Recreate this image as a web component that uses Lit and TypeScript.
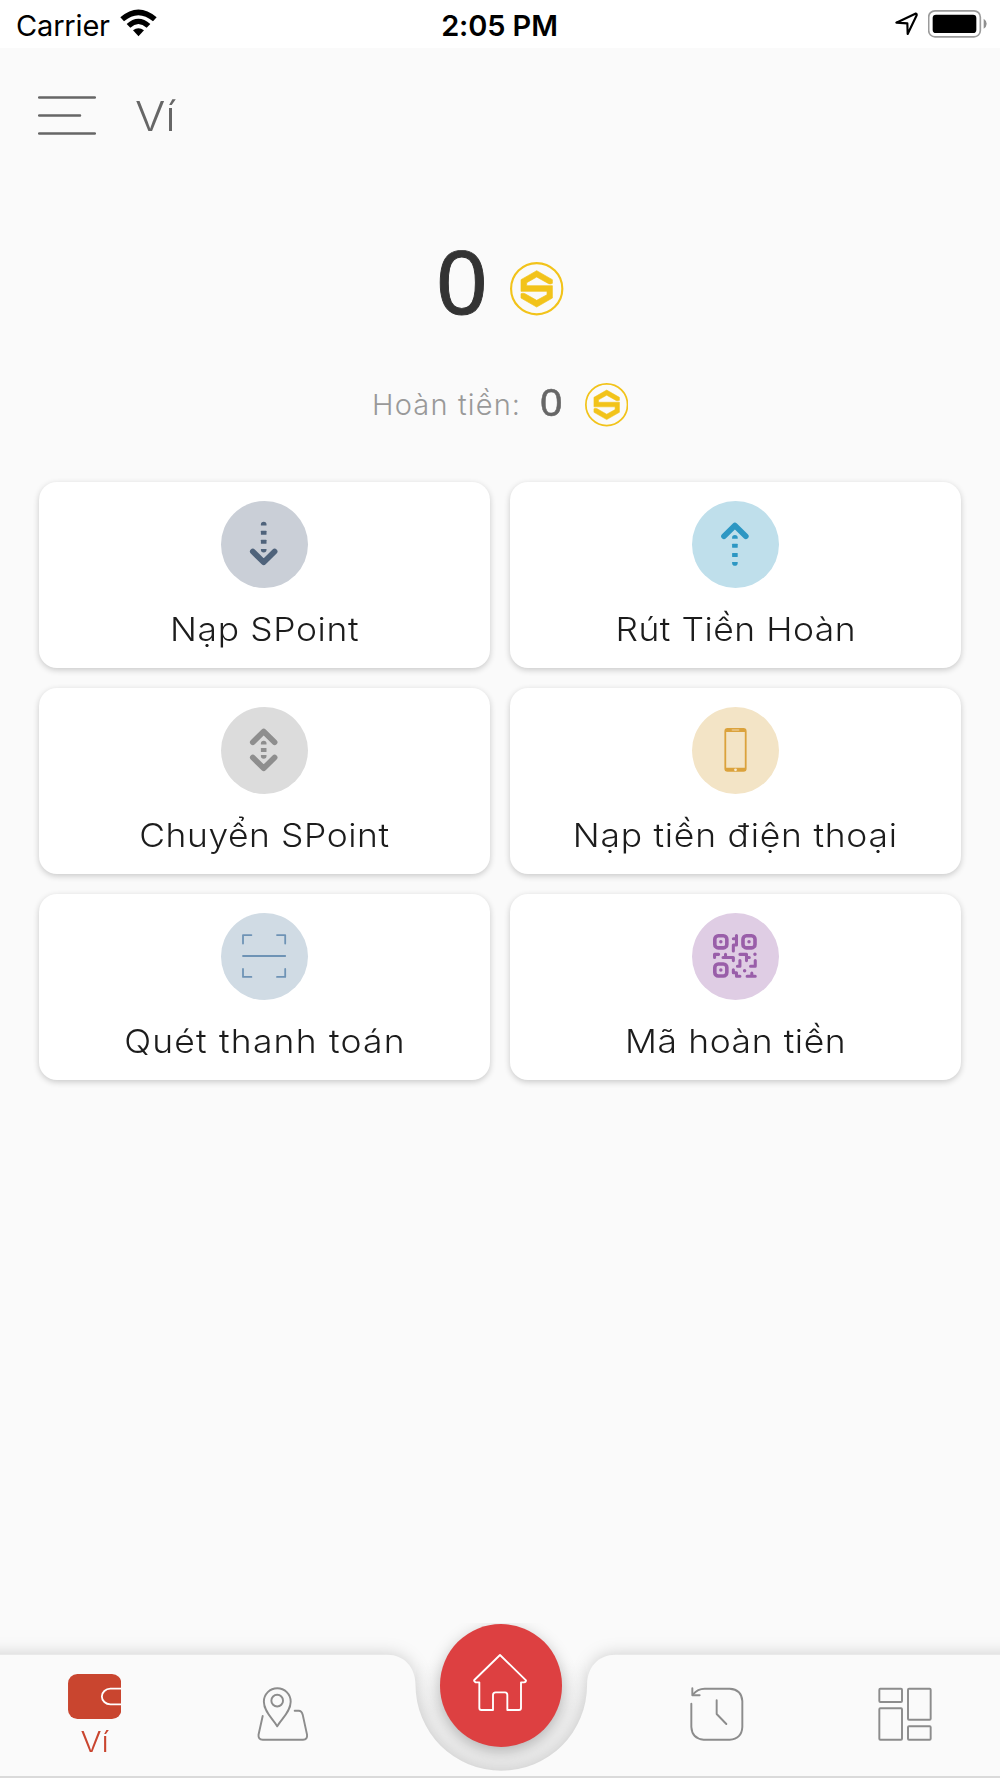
import { LitElement, html, svg, css } from "lit";
import { customElement, property } from "lit/decorators.js";
import { styleMap } from "lit/directives/style-map.js";

const dash = (x: number, y: number, h: number) =>
  svg`<rect x=${x - 2.8} y=${y} width="5.6" height=${h} rx="0.5" fill="currentColor" />`;
const capTop = (x: number, y: number) =>
  svg`<path d="M${x - 2.8} ${y + 3.5}V${y + 2.6}a2.8 2.8 0 0 1 5.6 0v.9z" fill="currentColor" />`;
const capBottom = (x: number, y: number) =>
  svg`<path d="M${x - 2.8} ${y}v.9a2.8 2.8 0 0 0 5.6 0v-.9z" fill="currentColor" />`;
const chevron = (d: string) =>
  svg`<path d=${d} fill="none" stroke="currentColor" stroke-width="5.7" stroke-linecap="round" stroke-linejoin="round" />`;

const glyphs: Record<string, unknown> = {
  down: svg`${capTop(42.7, 21)}${dash(42.7, 29.7, 4)}${dash(42.7, 38.7, 4)}${capBottom(42.7, 47.9)}
    ${chevron("M31.8 50.5L42.7 61.3L53.6 50.5")}`,
  up: svg`${chevron("M32 35.2L42.9 24.4L53.8 35.2")}
    ${capTop(42.9, 34.2)}${dash(42.9, 42.8, 4)}${dash(42.9, 52, 4)}${capBottom(42.9, 61)}`,
  both: svg`${chevron("M31.8 35.2L42.7 24.4L53.6 35.2")}
    ${capTop(42.7, 34)}${dash(42.7, 41, 4)}${capBottom(42.7, 48)}
    ${chevron("M31.8 50.5L42.7 61.3L53.6 50.5")}`,
  phone: svg`<path fill-rule="evenodd" fill="currentColor"
      d="M35.6 21H51.4A3.2 3.2 0 0 1 54.6 24.2V61.5A3.2 3.2 0 0 1 51.4 64.7H35.6A3.2 3.2 0 0 1 32.4 61.5V24.2A3.2 3.2 0 0 1 35.6 21ZM34.2 25V60.8H52.8V25Z" />
    <path d="M40.5 23H46.5" stroke="#e6bd74" stroke-width="1.8" stroke-linecap="round" />
    <circle cx="43.5" cy="62.8" r="1.4" fill="#f7ead0" />`,
  scan: svg`<path d="M22 30.5V22.1H30.4M56 22.1H64.2V30.5M64.2 56V63.9H56M30.4 63.9H22V56M22 43H64.2"
      fill="none" stroke="currentColor" stroke-width="1.8" stroke-linecap="round" stroke-linejoin="round" />`,
  code: svg`<g transform="translate(21 21) scale(3.13)" fill="none" stroke="currentColor" stroke-linecap="round" stroke-linejoin="round">
      <g stroke-width="1.15">
        <rect x=".58" y=".58" width="3.84" height="3.84" rx="1.1" />
        <rect x="9.58" y=".58" width="3.84" height="3.84" rx="1.1" />
        <rect x=".58" y="9.58" width="3.84" height="3.84" rx="1.1" />
      </g>
      <path stroke-width="1.1" d="M2.5 2.5h.01M11.5 2.5h.01M2.5 11.5h.01M13.4 6.5h.01M10.1 11.75h.01" />
      <path stroke-width=".98" d="M7.5 .5V3.5H6.5V5.4M6.5 1.5H7.5M.5 7.5V6.5H1.8M3.2 7.5H6.5V8.5M4 6.5V7.5M8.6 6.5H10.7V8.5M10.7 7.5H11.6M8.6 8.5V10.3H7.8M13.5 8.5V10.3H12M6.5 11.4V12.4H7.5V13.5H8.6M10.9 13.5H13.5M12.4 12.5V13.5" />
    </g>`,
};

@customElement("s-coin")
class SCoin extends LitElement {
  @property({ type: Number }) size = 53;
  static styles = css`
    :host { display: block; line-height: 0; color: #f2c31a; }
  `;
  render() {
    return html`<svg width=${this.size} height=${this.size} viewBox="-80 -80 160 160">
      <circle r="76.8" fill="none" stroke="currentColor" stroke-width="6.4" />
      <path fill="currentColor" stroke="currentColor" stroke-width="2" stroke-linejoin="round"
        d="M0 -54L47 -27V-16Q42 -13 36 -15L0 -35L-30 -18V-9H47V28L0 55L-47 28V15Q-41 12 -35 15L0 35L31 18V8H-47V-27Z" />
    </svg>`;
  }
}

@customElement("action-card")
class ActionCard extends LitElement {
  @property() label = "";
  @property() icon = "";
  @property({ type: Number }) tracking = 0.5;
  static styles = css`
    :host {
      display: flex; flex-direction: column; align-items: center; box-sizing: border-box;
      height: 186.6px; padding-top: 19.3px; border-radius: 18px; background: #fff;
      box-shadow: 0 2px 6px rgba(0, 0, 0, 0.2);
      font: 300 33.2px/40px Inter, sans-serif; color: #1c1c1c;
    }
    svg { display: block; width: 87px; height: 87px; border-radius: 50%; flex: none; }
    .label { margin-top: 21px; white-space: nowrap; transform: scaleX(1.067); }
    .down { background: #cacfd7; color: #4f637b; }
    .up { background: #bfdfeb; color: #2d97c3; }
    .both { background: #dcdcdc; color: #8e8e8e; }
    .phone { background: #f3e4c6; color: #dba23c; }
    .scan { background: #d0dbe4; color: #6e93b5; }
    .code { background: #dfcde4; color: #995ea9; }
  `;
  render() {
    return html`<svg class=${this.icon} viewBox="0 0 87 87">${glyphs[this.icon]}</svg>
      <div class="label" style=${styleMap({ letterSpacing: `${this.tracking}px` })}>${this.label}</div>`;
  }
}

@customElement("tab-bar")
class TabBar extends LitElement {
  static styles = css`
    :host { display: block; position: relative; height: 155px; overflow: hidden; flex: none; }
    svg { display: block; }
    .shape { position: absolute; inset: 0; }
    .surface { filter: drop-shadow(0 -1px 8px rgba(0, 0, 0, 0.17)); }
    .tabs {
      position: relative; display: grid; grid-template-columns: 188.5px 188px 1fr 188px 188.5px;
      height: 155px; padding-right: 1px;
    }
    .tab { display: flex; flex-direction: column; align-items: center; padding-top: 64px; color: #8c8c8c; }
    .tab.active { padding-top: 51px; color: #c9452f; font: 300 28px/34px Inter, sans-serif; }
    .tab.active span { margin-top: 6px; transform: scaleX(1.12); }
    .home { display: flex; justify-content: center; padding: 1.2px 0 0 3.6px; }
    .button {
      display: flex; justify-content: center; align-items: center; box-sizing: border-box;
      width: 122.4px; height: 122.4px; padding: 0 3px 5px 0; border-radius: 50%; background: #dd4041;
      box-shadow: 0 5px 16px rgba(0, 0, 0, 0.26);
    }
    .stroke { fill: none; stroke: currentColor; stroke-width: 5.8; stroke-linecap: round; stroke-linejoin: round; }
  `;
  render() {
    return html`
      <svg class="shape" width="1000" height="155" viewBox="0 0 1000 155">
        <defs>
          <linearGradient id="well" x1="0" y1="0" x2="0" y2="1">
            <stop offset="0.35" stop-color="#efefef" stop-opacity="0" />
            <stop offset="0.65" stop-color="#f0f0f0" />
          </linearGradient>
        </defs>
        <circle cx="501.3" cy="62" r="86.5" fill="url(#well)" />
        <path class="surface" fill="#fafafa"
          d="M-40 31.7H387C404 31.7 415.5 44 415.5 62A85.8 85.8 0 0 0 587.1 62C587.1 44 598.5 31.7 615.5 31.7H1040V200H-40Z" />
        <path d="M0 154H1000" stroke="#dadada" stroke-width="2" />
      </svg>
      <div class="tabs">
        <div class="tab active">
          <svg width="53.4" height="45" viewBox="0 0 160 135">
            <rect width="160" height="135" rx="28" fill="currentColor" />
            <path d="M160 44H127A25 23 0 0 0 127 91H160" fill="none" stroke="#fff" stroke-width="5.5" />
          </svg>
          <span>Ví</span>
        </div>
        <div class="tab">
          <svg width="53.4" height="54" viewBox="767 262 160 162">
            <g class="stroke">
              <path d="M830.5 380C820 360 790.5 337 790.5 306A40.2 40.2 0 0 1 871 306C871 337 841 360 830.5 380Z" />
              <circle cx="830.5" cy="303" r="17.5" />
              <path d="M787 349L774.5 405Q773 420 787 420H908Q922 420 920 405L907 345Q904 333 895 333H883" />
            </g>
          </svg>
        </div>
        <div class="home">
          <div class="button">
            <svg width="56" height="60" viewBox="276 158 168 180">
              <path d="M360 164L438 240Q438 246 432 246H423V323Q423 329 417 329H382V284Q382 276 375 276H347Q339 276 339 284V329H304Q298 329 298 323V246H287Q281 243 283 239Z"
                fill="none" stroke="#fff" stroke-width="5.6" stroke-linejoin="round" />
            </svg>
          </div>
        </div>
        <div class="tab">
          <svg width="54" height="54" viewBox="269 262 162 162">
            <g class="stroke">
              <path d="M273 312V382Q275 417 310 420H388Q424 418 426 382V304Q424 269 388 267H313Q292 267 278 284" />
              <path d="M276 266V287H298M349 302V343L378 373" />
            </g>
          </svg>
        </div>
        <div class="tab">
          <svg width="54" height="54" viewBox="834 262 162 162">
            <g class="stroke">
              <rect x="838" y="267" width="68" height="40" rx="3" />
              <rect x="838" y="326" width="68" height="94" rx="3" />
              <rect x="924" y="267" width="68" height="93" rx="3" />
              <rect x="924" y="380" width="68" height="40" rx="3" />
            </g>
          </svg>
        </div>
      </div>`;
  }
}

@customElement("app-root")
class AppRoot extends LitElement {
  static styles = css`
    :host {
      display: flex; flex-direction: column; width: 1000px; height: 1778px; overflow: hidden;
      background: #fafafa; font-family: Inter, sans-serif; color: #000;
    }
    svg { display: block; }
    .status {
      display: grid; grid-template-columns: 1fr auto 1fr; align-items: center; box-sizing: border-box;
      height: 48px; padding: 3px 13px 0 16px; background: #fff; font-size: 29px; line-height: 36px; flex: none;
    }
    .carrier { display: flex; align-items: center; gap: 10px; letter-spacing: -0.17px; }
    .carrier svg { margin-top: -5px; }
    .time { font-weight: 600; letter-spacing: -0.1px; margin-right: 4px; }
    .power { display: flex; align-items: center; justify-content: flex-end; gap: 10px; margin-top: -3px; }
    .header { display: flex; align-items: center; gap: 39px; height: 134px; padding: 0 38px; box-sizing: border-box; flex: none; }
    .title {
      margin-top: 2px; font-size: 41px; line-height: 50px; font-weight: 300; color: #666;
      transform: scaleX(1.1); transform-origin: left;
    }
    .balance {
      display: flex; justify-content: center; align-items: center; gap: 23px; height: 173px; padding: 25px 0 0 1px;
      box-sizing: border-box; font: 400 87px/100px "Noto Sans", sans-serif; color: #333; flex: none;
    }
    .balance span { margin-top: -2px; transform: scaleX(1.05); -webkit-text-stroke: 0.9px #333; }
    .balance s-coin { margin-top: 16px; }
    .refund {
      display: flex; justify-content: center; align-items: center; height: 100px;
      font-size: 29px; font-weight: 300; color: #999; flex: none;
    }
    .refund span { margin-top: -2px; letter-spacing: 1.15px; }
    .refund b {
      margin: -8px 22px 0 19px; font: 400 39px/48px "Noto Sans", sans-serif; color: #666;
      transform: scaleX(1.03); -webkit-text-stroke: 0.5px #666;
    }
    .grid {
      display: grid; grid-template-columns: 1fr 1fr; gap: 19.4px 20px; padding: 26.7px 39px 0;
      flex: 1; align-content: start;
    }
  `;
  render() {
    return html`
      <div class="status">
        <div class="carrier">
          <span>Carrier</span>
          <svg width="37" height="28" viewBox="360 29 111 84" fill="#000">
            <path d="M361 54Q415 7 470 54L459 66Q415 29 372 66Z" />
            <path d="M380 74Q415 43 451 74L440 85Q415 63 391 85Z" />
            <path d="M399 93Q415 80 432 93L415.5 111Z" />
          </svg>
        </div>
        <div class="time">2:05 PM</div>
        <div class="power">
          <svg width="23" height="24" viewBox="1186 39 69 72">
            <path d="M1190 71L1247 44Q1252 43 1251 49L1224 105L1223 73Z" fill="none" stroke="#000" stroke-width="6.4" stroke-linejoin="round" />
          </svg>
          <svg width="59" height="28" viewBox="1285 31 177 84">
            <rect x="1287" y="33.5" width="155" height="78" rx="19" fill="none" stroke="#9b9b9b" stroke-width="5" />
            <rect x="1299" y="45" width="131" height="55" rx="10" />
            <path d="M1452 57Q1461 63 1461 72T1452 87Z" fill="#8f8f8f" />
          </svg>
        </div>
      </div>
      <div class="header">
        <svg width="58" height="40" viewBox="0 0 58 40">
          <path d="M1.2 2.5H56.8M1.2 20.5H42M1.2 38.5H56.8" stroke="#666" stroke-width="2.5" stroke-linecap="round" />
        </svg>
        <div class="title">Ví</div>
      </div>
      <div class="balance"><span>0</span><s-coin .size=${53.4}></s-coin></div>
      <div class="refund"><span>Hoàn tiền:</span><b>0</b><s-coin .size=${43.4}></s-coin></div>
      <div class="grid">
        <action-card icon="down" label="Nạp SPoint" tracking="0.6"></action-card>
        <action-card icon="up" label="Rút Tiền Hoàn" tracking="0.5"></action-card>
        <action-card icon="both" label="Chuyển SPoint" tracking="0.55"></action-card>
        <action-card icon="phone" label="Nạp tiền điện thoại" tracking="0.72"></action-card>
        <action-card icon="scan" label="Quét thanh toán" tracking="1.15"></action-card>
        <action-card icon="code" label="Mã hoàn tiền" tracking="0.57"></action-card>
      </div>
      <tab-bar></tab-bar>`;
  }
}
